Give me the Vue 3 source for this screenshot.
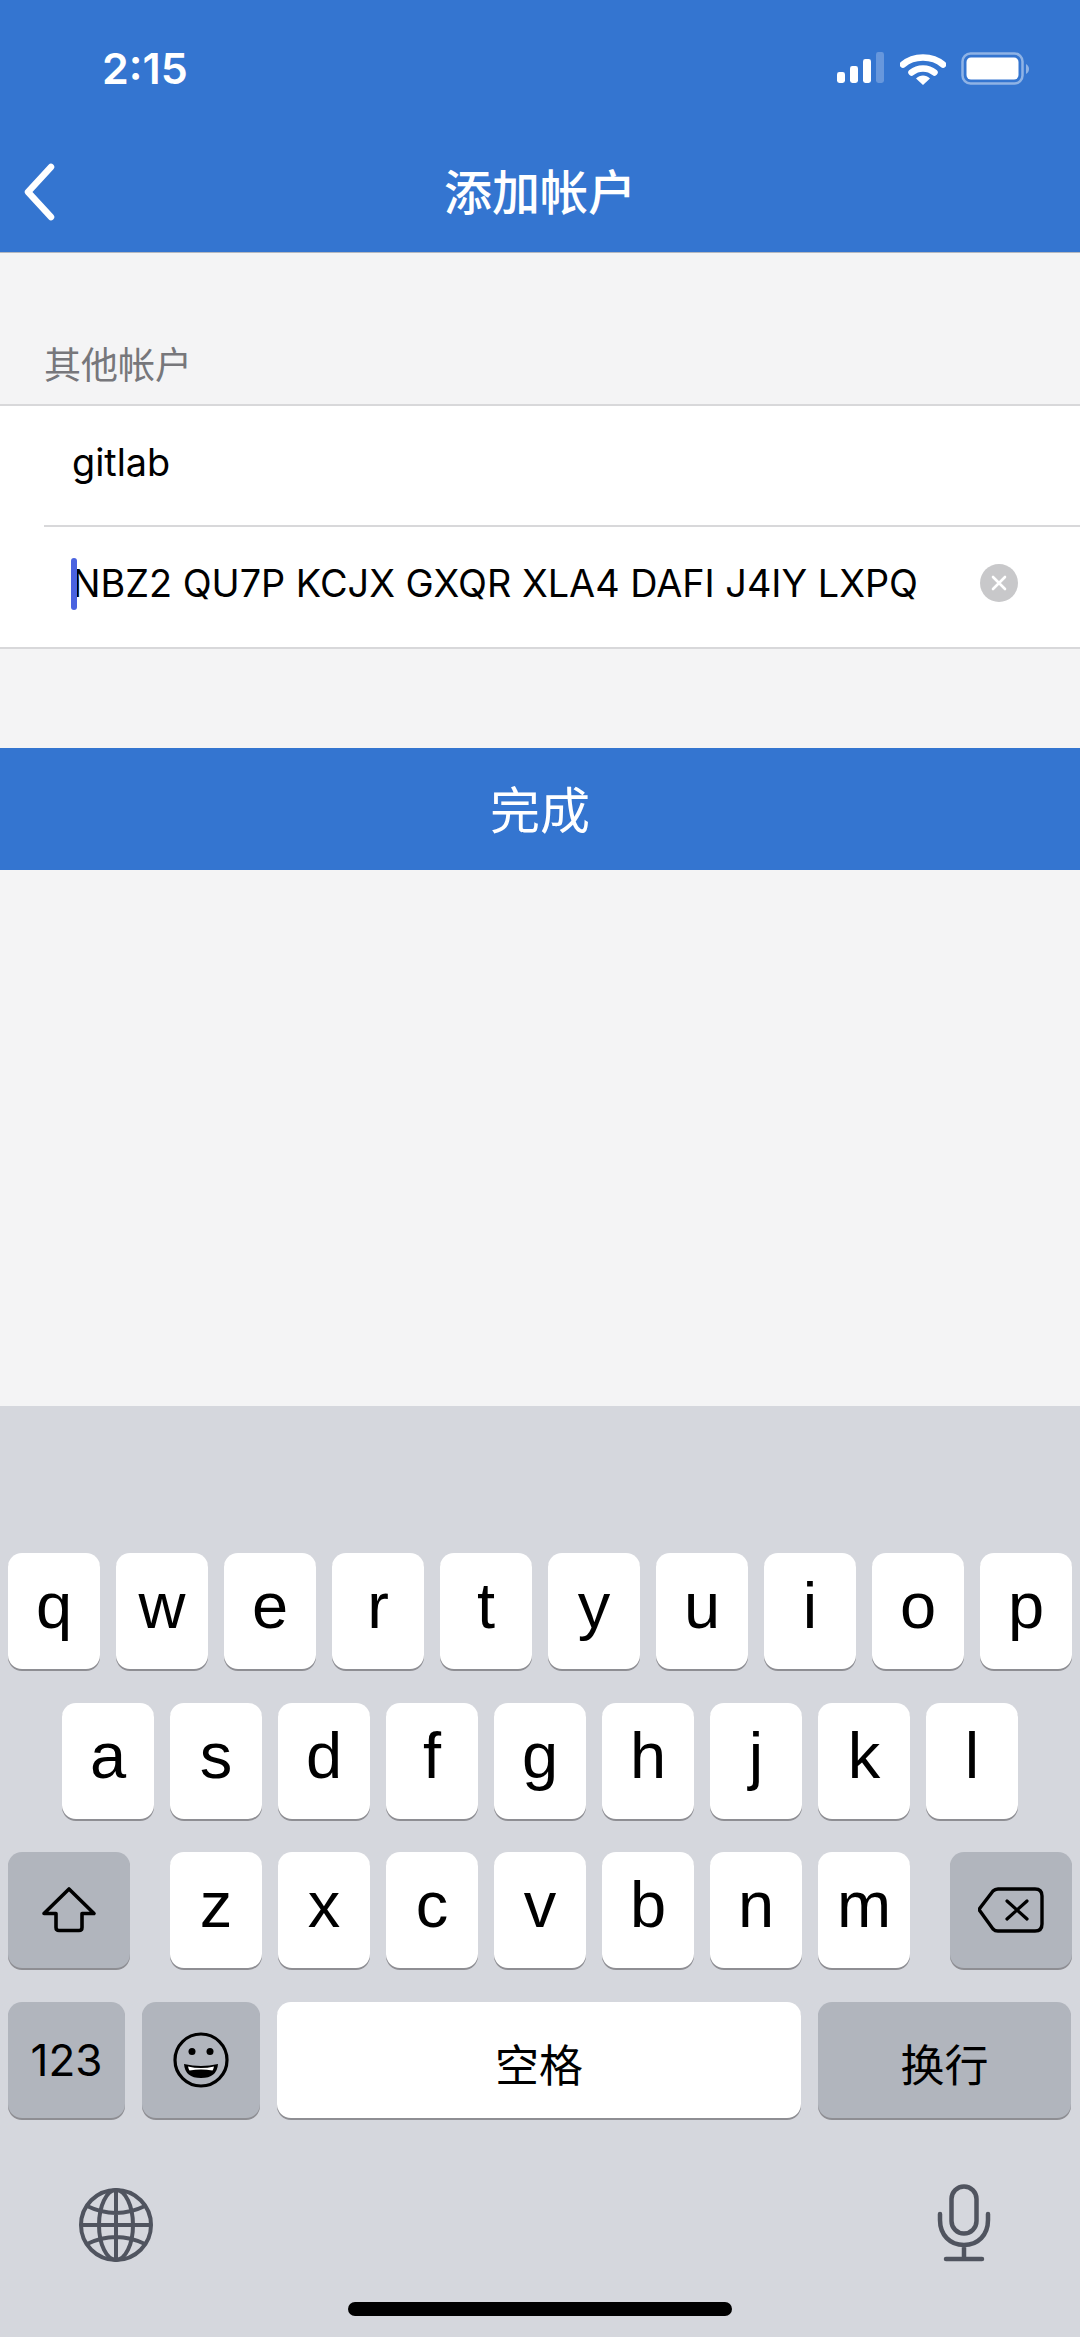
<script setup>
const row1 = ['q','w','e','r','t','y','u','i','o','p']
const row2 = ['a','s','d','f','g','h','j','k','l']
const row3 = ['z','x','c','v','b','n','m']
</script>

<template>
  <div class="page">
    <header class="head">
      <div class="status">
        <span class="time">2:15</span>
        <div class="status-icons">
          <svg class="signal" width="48" height="34" viewBox="0 0 48 34">
            <rect x="0" y="20" width="8" height="11" rx="2.4" fill="#fff"/>
            <rect x="13" y="14" width="8" height="17" rx="2.4" fill="#fff"/>
            <rect x="26" y="7" width="8" height="24" rx="2.4" fill="#fff"/>
            <rect x="39" y="0" width="8" height="31" rx="2.4" fill="#fff" opacity=".25"/>
          </svg>
          <svg class="wifi" width="46" height="34" viewBox="0 0 46 34">
            <path d="M3 12.500C13.500 3 32.500 3 43 12.500" fill="none" stroke="#fff" stroke-width="6.500" stroke-linecap="round"/>
            <path d="M11.500 20.500C18 15 28 15 34.500 20.500" fill="none" stroke="#fff" stroke-width="6.500" stroke-linecap="round"/>
            <path d="M16 26.500C20 22.500 26 22.500 30 26.500L23 33Z" fill="#fff"/>
          </svg>
          <svg class="battery" width="69" height="34" viewBox="0 0 69 34">
            <rect x="1.500" y="1.500" width="60" height="30" rx="8" fill="none" stroke="#fff" stroke-opacity=".45" stroke-width="2.500"/>
            <rect x="5.500" y="5.500" width="52" height="22" rx="4.500" fill="#fff"/>
            <path d="M65 12C67 13 68 15 68 17C68 19 67 21 65 22Z" fill="#fff" fill-opacity=".45"/>
          </svg>
        </div>
      </div>
      <div class="nav">
        <svg class="back" width="36" height="58" viewBox="0 0 36 58">
          <path d="M29 4L6 29L29 54" fill="none" stroke="#fff" stroke-width="6.500" stroke-linecap="round" stroke-linejoin="round"/>
        </svg>
        <h1 class="title">添加帐户</h1>
      </div>
    </header>

    <main class="content">
      <div class="section-label">其他帐户</div>
      <section class="form">
        <div class="field first"><span class="field-text">gitlab</span></div>
        <div class="field second">
          <span class="caret"></span>
          <span class="field-text key-value">NBZ2 QU7P KCJX GXQR XLA4 DAFI J4IY LXPQ</span>
          <span class="clear">
            <svg width="16" height="16" viewBox="0 0 16 16">
              <path d="M2 2L14 14M14 2L2 14" stroke="#fff" stroke-width="2.600" stroke-linecap="round"/>
            </svg>
          </span>
        </div>
      </section>
      <div class="done">完成</div>
    </main>

    <footer class="keyboard">
      <div class="row r1">
        <div v-for="k in row1" :key="k" class="key">{{ k }}</div>
      </div>
      <div class="row r2">
        <div v-for="k in row2" :key="k" class="key">{{ k }}</div>
      </div>
      <div class="row r3">
        <div class="key dark wide-side">
          <svg width="56" height="48" viewBox="0 0 56 48">
            <path d="M28 3L53 27.500H41V41.500Q41 44.500 38 44.500H18Q15 44.500 15 41.500V27.500H3Z" fill="none" stroke="#000" stroke-width="3.600" stroke-linejoin="round"/>
          </svg>
        </div>
        <div class="letters">
          <div v-for="k in row3" :key="k" class="key">{{ k }}</div>
        </div>
        <div class="key dark wide-side">
          <svg width="66" height="46" viewBox="0 0 66 46">
            <path d="M20 2H57Q64 2 64 9V37Q64 44 57 44H20Q17 44 15 42L2 24Q0.500 23 2 21L15 4Q17 2 20 2Z" fill="none" stroke="#000" stroke-width="3.400" stroke-linejoin="round"/>
            <path d="M29 14L49 32M49 14L29 32" stroke="#000" stroke-width="3.200" stroke-linecap="round"/>
          </svg>
        </div>
      </div>
      <div class="row r4">
        <div class="key dark num">123</div>
        <div class="key dark emoji">
          <svg width="56" height="56" viewBox="0 0 56 56">
            <circle cx="28" cy="28" r="26" fill="none" stroke="#000" stroke-width="3.200"/>
            <circle cx="19" cy="19.500" r="3.500" fill="#000"/>
            <circle cx="37" cy="19.500" r="3.500" fill="#000"/>
            <path d="M11 32Q28 36 45 32Q44 46 28 46Q12 46 11 32Z" fill="#000"/>
            <path d="M15 34.500Q28 37.500 41 34.500Q40.500 37 39.500 38.500Q28 36.500 16.500 38.500Q15.500 37 15 34.500Z" fill="#fff"/>
          </svg>
        </div>
        <div class="key space">空格</div>
        <div class="key dark enter">换行</div>
      </div>
      <div class="bottom-icons">
        <svg class="globe" width="76" height="74" viewBox="0 0 76 74">
          <g fill="none" stroke="#50545f" stroke-width="4">
            <circle cx="38" cy="37" r="35"/>
            <ellipse cx="38" cy="37" rx="17" ry="35"/>
            <path d="M38 2V72M3 37H73M9 18Q38 32 67 18M9 56Q38 42 67 56"/>
          </g>
        </svg>
        <svg class="mic" width="54" height="78" viewBox="0 0 54 78">
          <g fill="none" stroke="#50545f" stroke-width="4.500" stroke-linecap="round">
            <rect x="14.500" y="2.500" width="25" height="47" rx="12.500"/>
            <path d="M3 30V36C3 51 13 61 27 61C41 61 51 51 51 36V30M27 61V75M9 75H45"/>
          </g>
        </svg>
      </div>
      <div class="home-wrap"><div class="home"></div></div>
    </footer>
  </div>
</template>

<style scoped>
.page {
  width: 1080px;
  height: 2337px;
  display: flex;
  flex-direction: column;
  background: #f4f4f5;
  font-family: "Inter", "Liberation Sans", "Noto Sans CJK SC", sans-serif;
  overflow: hidden;
}
.head {
  height: 252px;
  background: #3475d0;
  color: #fff;
  flex: none;
  border-bottom: 1px solid #b4b8c0;
  box-sizing: content-box;
}
.status {
  height: 134px;
  padding: 0 50px 0 102px;
  display: flex;
  justify-content: space-between;
  align-items: flex-start;
}
.time {
  margin-top: 45px;
  font-size: 43px;
  line-height: 46px;
  font-weight: 600;
}
.status-icons {
  margin-top: 52px;
  display: flex;
  gap: 15px;
  align-items: flex-start;
}
.nav {
  height: 118px;
  display: flex;
  align-items: flex-start;
  justify-content: center;
  position: relative;
}
.back {
  position: absolute;
  left: 22px;
  top: 29px;
}
.title {
  margin: 27px 0 0;
  font-size: 48px;
  line-height: 56px;
  font-weight: 500;
  font-family: "Noto Sans CJK SC", sans-serif;
}
.content {
  flex: 1;
  display: flex;
  flex-direction: column;
}
.section-label {
  margin-top: 88px;
  height: 63px;
  padding-left: 44px;
  font-size: 37px;
  line-height: 44px;
  color: #77777b;
  font-family: "Noto Sans CJK SC", sans-serif;
}
.form {
  background: #fff;
  border-top: 2px solid #d8d8da;
  border-bottom: 2px solid #d8d8da;
}
.field {
  height: 121px;
  padding-left: 72px;
  padding-bottom: 10px;
  box-sizing: border-box;
  display: flex;
  align-items: center;
  font-size: 37.800px;
  color: #000;
  position: relative;
}
.field.second {
  height: 120px;
  padding-bottom: 8px;
  justify-content: space-between;
  padding-right: 62px;
}
.field.first::after {
  content: "";
  position: absolute;
  left: 44px;
  right: 0;
  bottom: 0;
  border-bottom: 2px solid #d8d8da;
}
.caret {
  position: absolute;
  left: 71px;
  top: 31px;
  width: 6px;
  height: 52px;
  border-radius: 3px;
  background: #4a63e0;
}
.clear {
  width: 38px;
  height: 38px;
  border-radius: 50%;
  background: #c8c8ca;
  display: flex;
  align-items: center;
  justify-content: center;
}
.done {
  margin-top: 99px;
  height: 122px;
  padding-bottom: 5px;
  box-sizing: border-box;
  background: #3475d0;
  color: #fff;
  display: flex;
  align-items: center;
  justify-content: center;
  font-size: 50px;
  font-family: "Noto Sans CJK SC", sans-serif;
}
.keyboard {
  height: 931px;
  flex: none;
  background: #d5d7dd;
  padding: 147px 8px 0;
  box-sizing: border-box;
  display: flex;
  flex-direction: column;
}
.row {
  display: flex;
  gap: 16px;
  height: 116px;
  margin-bottom: 33.5px;
}
.r2 {
  justify-content: center;
}
.r3 {
  justify-content: space-between;
}
.letters {
  display: flex;
  gap: 16px;
}
.key {
  width: 92px;
  height: 116px;
  border-radius: 14px;
  background: #fff;
  box-shadow: 0 2px 0 #8e8e93;
  display: flex;
  align-items: center;
  justify-content: center;
  font-family: "Liberation Sans", sans-serif;
  font-size: 65px;
  color: #000;
  padding-bottom: 11px;
  box-sizing: border-box;
}
.dark {
  background: #b1b5bd;
  padding-bottom: 0;
}
.wide-side {
  width: 122px;
}
.num {
  width: 117px;
  font-family: "Inter", sans-serif;
  font-size: 44px;
}
.emoji {
  width: 118px;
}
.space {
  width: 524px;
  font-family: "Noto Sans CJK SC", sans-serif;
  font-size: 44px;
}
.enter {
  width: 253px;
  font-family: "Noto Sans CJK SC", sans-serif;
  font-size: 44px;
}
.r4 .key {
  padding-bottom: 0;
}
.r4 .space,
.r4 .enter {
  padding-top: 6px;
}
.r4 {
  gap: 17px;
  margin-bottom: 66.5px;
}
.bottom-icons {
  height: 78px;
  padding: 0 81px 0 70px;
  display: flex;
  justify-content: space-between;
  align-items: flex-end;
}
.home-wrap {
  display: flex;
  justify-content: center;
  margin-top: 39.500px;
}
.home {
  width: 384px;
  height: 14px;
  border-radius: 7px;
  background: #000;
}
</style>
